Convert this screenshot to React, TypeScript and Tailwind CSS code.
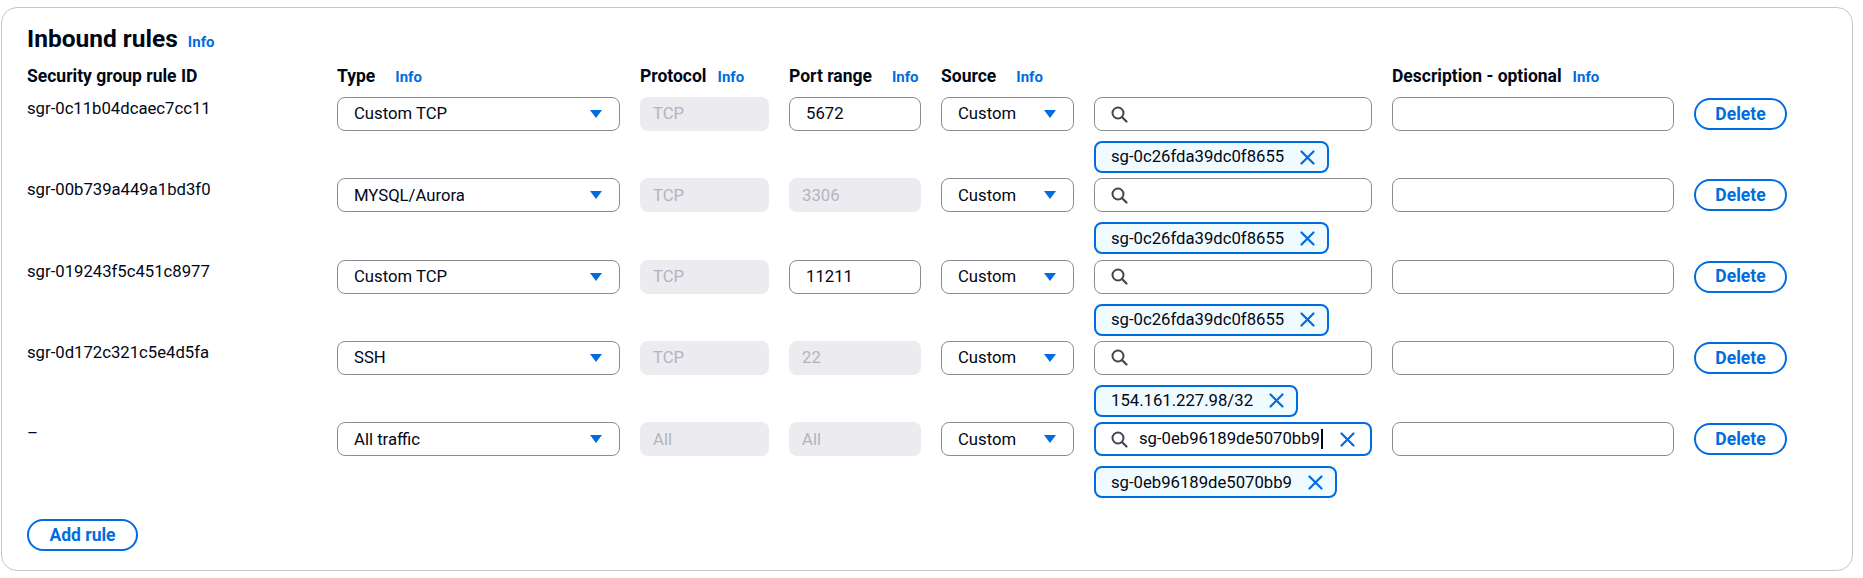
import React from "react";

type Rule = {
  id: string;
  type: string;
  protocol: string;
  port: string;
  portEditable: boolean;
  token: string;
  search?: string;
};

const rules: Rule[] = [
  { id: "sgr-0c11b04dcaec7cc11", type: "Custom TCP", protocol: "TCP", port: "5672", portEditable: true, token: "sg-0c26fda39dc0f8655" },
  { id: "sgr-00b739a449a1bd3f0", type: "MYSQL/Aurora", protocol: "TCP", port: "3306", portEditable: false, token: "sg-0c26fda39dc0f8655" },
  { id: "sgr-019243f5c451c8977", type: "Custom TCP", protocol: "TCP", port: "11211", portEditable: true, token: "sg-0c26fda39dc0f8655" },
  { id: "sgr-0d172c321c5e4d5fa", type: "SSH", protocol: "TCP", port: "22", portEditable: false, token: "154.161.227.98/32" },
  { id: "–", type: "All traffic", protocol: "All", port: "All", portEditable: false, token: "sg-0eb96189de5070bb9", search: "sg-0eb96189de5070bb9" },
];

const cols = "grid grid-cols-[290px_283px_129px_132px_133px_278px_282px_93px] gap-x-[20px]";

function Info() {
  return <span className="text-[15px] font-bold text-[#006ce0]">Info</span>;
}

function Caret() {
  return (
    <svg width="12" height="8" viewBox="0 0 12 8" className="shrink-0">
      <polygon points="0,0 12,0 6,8" fill="#006ce0" />
    </svg>
  );
}

function Close() {
  return (
    <svg width="15" height="15" viewBox="0 0 15 15" className="shrink-0">
      <path d="M1.5 1.5 L13.5 13.5 M13.5 1.5 L1.5 13.5" stroke="#006ce0" strokeWidth="2.2" strokeLinecap="round" />
    </svg>
  );
}

function Search() {
  return (
    <svg width="17" height="17" viewBox="0 0 17 17" className="shrink-0">
      <circle cx="7" cy="7" r="5.5" fill="none" stroke="#424650" strokeWidth="2" />
      <path d="M11 11 L15.5 15.5" stroke="#424650" strokeWidth="2.2" strokeLinecap="round" />
    </svg>
  );
}

function Select({ value }: { value: string }) {
  return (
    <div className="h-[34px] flex items-center justify-between pl-[16px] pr-[17px] border border-[#8c8c94] rounded-[8px] bg-white">
      <span>{value}</span>
      <Caret />
    </div>
  );
}

function TextBox({ value, disabled }: { value: string; disabled?: boolean }) {
  if (disabled) {
    return (
      <div className="h-[34px] flex items-center pl-[13px] rounded-[8px] bg-[#ebebf0] text-[#b4b4bb]">{value}</div>
    );
  }
  return (
    <div className="h-[34px] flex items-center pl-[16px] border border-[#8c8c94] rounded-[8px] bg-white">{value}</div>
  );
}

function Token({ label }: { label: string }) {
  return (
    <div className="mt-[10px] self-start h-[32px] flex items-center gap-[16px] pl-[15px] pr-[12px] border-2 border-[#006ce0] rounded-[8px] bg-[#f0fbff]">
      <span>{label}</span>
      <Close />
    </div>
  );
}

function SourceSearch({ value }: { value?: string }) {
  if (value) {
    return (
      <div className="h-[34px] flex items-center pl-[15px] pr-[15px] border-2 border-[#006ce0] rounded-[8px] bg-white">
        <Search />
        <span className="ml-[11px] border-r-2 border-[#000716] leading-[20px] pr-[1px]">{value}</span>
        <span className="flex-1" />
        <Close />
      </div>
    );
  }
  return (
    <div className="h-[34px] flex items-center pl-[16px] border border-[#8c8c94] rounded-[8px] bg-white">
      <Search />
    </div>
  );
}

export default function App() {
  return (
    <div className="min-h-[578px] bg-white pt-[7px] pl-[1px] font-['Roboto',sans-serif] text-[16.7px] text-[#000716]">
      <div className="w-[1852px] h-[564px] border border-[#c6c6cd] rounded-[16px] bg-white pl-[25px] pt-[17px]">
        <div className="h-[28px] leading-[28px] whitespace-nowrap">
          <span className="text-[24.5px] font-bold">Inbound rules</span>
          <span className="ml-[10px]"><Info /></span>
        </div>

        {/* column headers */}
        <div className={`${cols} h-[20px] mt-[13px] leading-[20px] text-[17.5px] font-bold whitespace-nowrap`}>
          <div>Security group rule ID</div>
          <div><span>Type</span><span className="ml-[20px]"><Info /></span></div>
          <div><span>Protocol</span><span className="ml-[11px]"><Info /></span></div>
          <div><span>Port range</span><span className="ml-[20px]"><Info /></span></div>
          <div><span>Source</span><span className="ml-[20px]"><Info /></span></div>
          <div />
          <div><span>Description - optional</span><span className="ml-[11px]"><Info /></span></div>
          <div />
        </div>

        <div className="mt-[11px] flex flex-col gap-[5.3px]">
          {rules.map((r, i) => (
            <div key={i} className={`${cols} items-start`}>
              <div className="pt-[2px] leading-[20px]">{r.id}</div>
              <Select value={r.type} />
              <TextBox value={r.protocol} disabled />
              <TextBox value={r.port} disabled={!r.portEditable} />
              <Select value="Custom" />
              <div className="flex flex-col">
                <SourceSearch value={r.search} />
                <Token label={r.token} />
              </div>
              <div className="h-[34px] border border-[#8c8c94] rounded-[8px] bg-white" />
              <button className="mt-[1px] h-[32px] rounded-full border-2 border-[#006ce0] text-[#006ce0] text-[17.5px] font-bold">
                Delete
              </button>
            </div>
          ))}
        </div>

        <button className="mt-[21px] w-[111px] h-[32px] rounded-full border-2 border-[#006ce0] text-[#006ce0] text-[17.5px] font-bold">
          Add rule
        </button>
      </div>
    </div>
  );
}
